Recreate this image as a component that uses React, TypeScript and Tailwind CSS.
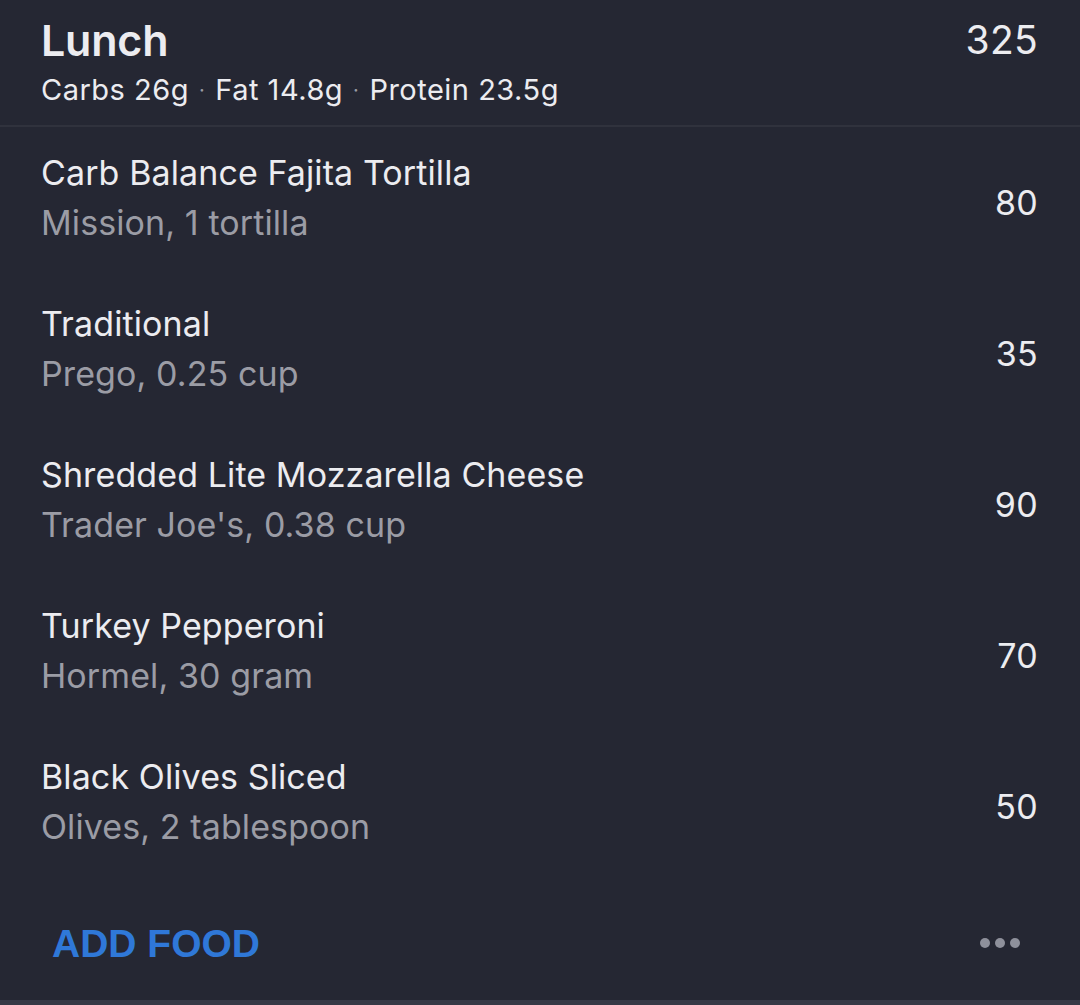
import React from "react";

const foods = [
  { name: "Carb Balance Fajita Tortilla", sub: "Mission, 1 tortilla", cal: 80 },
  { name: "Traditional", sub: "Prego, 0.25 cup", cal: 35 },
  { name: "Shredded Lite Mozzarella Cheese", sub: "Trader Joe's, 0.38 cup", cal: 90 },
  { name: "Turkey Pepperoni", sub: "Hormel, 30 gram", cal: 70 },
  { name: "Black Olives Sliced", sub: "Olives, 2 tablespoon", cal: 50 },
];

export default function App() {
  return (
    <div
      className="w-[1080px] h-[1005px] bg-[#252733] text-[#ececf0] flex flex-col overflow-hidden"
      style={{ fontFamily: "Inter, 'Noto Sans', sans-serif" }}
    >
      <div className="h-[127px] flex justify-between pl-[41px] pr-[42px] pt-[14px] border-b-2 border-[#30323d] shrink-0">
        <div className="flex flex-col">
          <div className="text-[43px] leading-[52px] font-semibold tracking-[-0.2px]">Lunch</div>
          <div className="text-[29px] leading-[40px] mt-[4px] flex items-center tracking-[0.5px]">
            <span>Carbs 26g</span>
            <span className="text-[#9a9ba3] text-[20px] mx-[10px]">·</span>
            <span>Fat 14.8g</span>
            <span className="text-[#9a9ba3] text-[20px] mx-[10px]">·</span>
            <span>Protein 23.5g</span>
          </div>
        </div>
        <div className="text-[39px] leading-[52px] mt-[0px] tracking-[0.3px]">325</div>
      </div>
      {foods.map((f) => (
        <div key={f.name} className="h-[151px] flex items-center justify-between pl-[41px] pr-[42px] shrink-0">
          <div className="flex flex-col mt-[-10px] tracking-[0.1px]">
            <div className="text-[34px] leading-[50px]">{f.name}</div>
            <div className="text-[34px] leading-[50px] text-[#9b9ca5]">{f.sub}</div>
          </div>
          <div className="text-[34px] leading-[50px] tracking-[0.3px]">{f.cal}</div>
        </div>
      ))}
      <div className="h-[118px] flex items-center justify-between pl-[52px] pr-[60px] shrink-0 pt-[4px]">
        <div
          className="text-[39px] font-bold text-[#2f78d8] leading-none"
          style={{ fontFamily: "'Liberation Sans', Arial, sans-serif" }}
        >
          ADD FOOD
        </div>
        <div className="flex gap-[5px]">
          <span className="w-[10px] h-[10px] rounded-full bg-[#8e909b]" />
          <span className="w-[10px] h-[10px] rounded-full bg-[#8e909b]" />
          <span className="w-[10px] h-[10px] rounded-full bg-[#8e909b]" />
        </div>
      </div>
      <div className="flex-1 bg-[#363845]" />
    </div>
  );
}
